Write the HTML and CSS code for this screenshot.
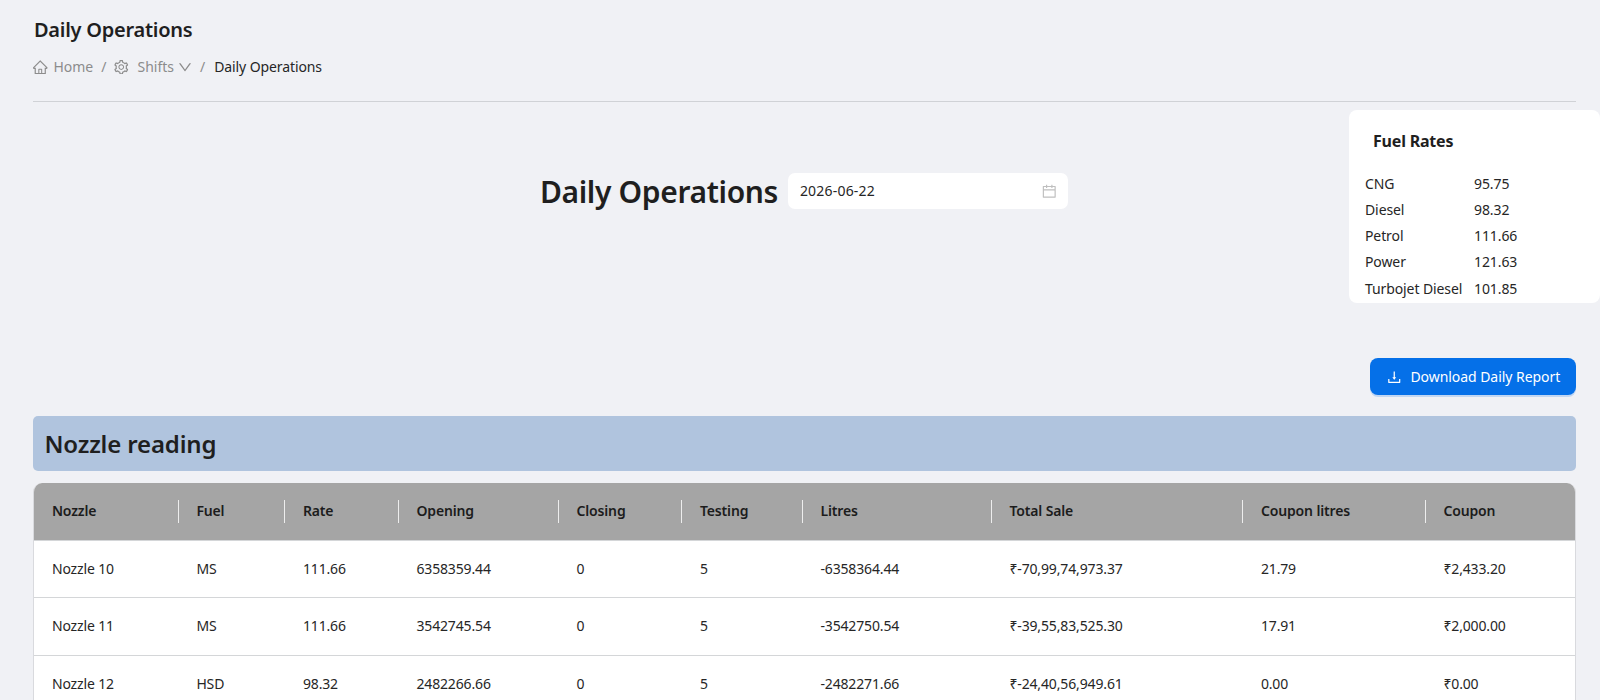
FILE: index.html
```
<!DOCTYPE html>
<html lang="en">
<head>
  <meta charset="UTF-8" />
  <meta name="viewport" content="width=device-width, initial-scale=1.0" />
  <title>Daily Operations</title>
  <link rel="stylesheet" href="styles.css">
</head>
<body>
  <header class="page-header">
    <h1>Daily Operations</h1>
    <nav class="breadcrumb">
      <a class="crumb-home"><svg class="icon" viewBox="64 64 896 896"><path d="M946.5 505L560.1 118.8l-25.9-25.9a31.5 31.5 0 00-44.4 0L77.5 505a63.9 63.9 0 00-18.8 46c.4 35.2 29.7 63.3 64.9 63.3h42.5V940h691.8V614.3h43.4c17.1 0 33.2-6.7 45.3-18.8a63.6 63.6 0 0018.7-45.3c0-17-6.7-33.1-18.8-45.2zM568 868H456V664h112v204zm217.9-325.7V868H632V640c0-22.1-17.9-40-40-40H432c-22.1 0-40 17.9-40 40v228H238.1V542.3h-96l370-369.7 23.1 23.1L882 542.3h-96.1z"/></svg><span>Home</span></a>
      <span class="slash">/</span>
      <a class="crumb-shifts"><svg class="icon" viewBox="64 64 896 896"><path d="M924.8 625.7l-65.5-56c3.1-19 4.7-38.4 4.7-57.8s-1.6-38.8-4.7-57.8l65.5-56a32.03 32.03 0 009.3-35.2l-.9-2.6a443.74 443.74 0 00-79.7-137.9l-1.8-2.1a32.12 32.12 0 00-35.1-9.5l-81.3 28.9c-30-24.6-63.5-44-99.7-57.6l-15.7-85a32.05 32.05 0 00-25.8-25.7l-2.7-.5c-52.1-9.4-106.9-9.4-159 0l-2.7.5a32.05 32.05 0 00-25.8 25.7l-15.8 85.4a351.86 351.86 0 00-99 57.4l-81.9-29.1a32 32 0 00-35.1 9.5l-1.8 2.1a446.02 446.02 0 00-79.7 137.9l-.9 2.6c-4.5 12.5-.8 26.5 9.3 35.2l66.3 56.6c-3.1 18.8-4.6 38-4.6 57.1 0 19.2 1.5 38.4 4.6 57.1L99 625.5a32.03 32.03 0 00-9.3 35.2l.9 2.6c18.1 50.4 44.9 96.9 79.7 137.9l1.8 2.1a32.12 32.12 0 0035.1 9.5l81.9-29.1c29.8 24.5 63.1 43.9 99 57.4l15.8 85.4a32.05 32.05 0 0025.8 25.7l2.7.5a449.4 449.4 0 00159 0l2.7-.5a32.05 32.05 0 0025.8-25.7l15.7-85a350 350 0 0099.7-57.6l81.3 28.9a32 32 0 0035.1-9.5l1.8-2.1c34.8-41.1 61.6-87.5 79.7-137.9l.9-2.6c4.5-12.3.8-26.3-9.3-35zM788.3 465.9c2.5 15.1 3.8 30.6 3.8 46.1s-1.3 31-3.8 46.1l-6.6 40.1 74.7 63.9a370.03 370.03 0 01-42.6 73.6L721 702.8l-31.4 25.8c-23.9 19.6-50.5 35-79.3 45.8l-38.1 14.3-17.9 97a377.5 377.5 0 01-85 0l-17.9-97.2-37.8-14.5c-28.5-10.8-55-26.2-78.7-45.7l-31.4-25.9-93.4 33.2c-17-22.9-31.2-47.6-42.6-73.6l75.5-64.5-6.5-40c-2.4-14.9-3.7-30.3-3.7-45.5 0-15.3 1.2-30.6 3.7-45.5l6.5-40-75.5-64.5c11.3-26.1 25.6-50.7 42.6-73.6l93.4 33.2 31.4-25.9c23.7-19.5 50.2-34.9 78.7-45.7l37.9-14.3 17.9-97.2c28.1-3.2 56.8-3.2 85 0l17.9 97 38.1 14.3c28.7 10.8 55.4 26.2 79.3 45.8l31.4 25.8 92.8-32.9c17 22.9 31.2 47.6 42.6 73.6L781.8 426l6.5 39.9zM512 326c-97.2 0-176 78.8-176 176s78.8 176 176 176 176-78.8 176-176-78.8-176-176-176zm79.2 255.2A111.6 111.6 0 01512 614c-29.9 0-58-11.7-79.2-32.8A111.6 111.6 0 01400 502c0-29.9 11.7-58 32.8-79.2C454 401.6 482.1 390 512 390c29.9 0 58 11.6 79.2 32.8A111.6 111.6 0 01624 502c0 29.9-11.7 58-32.8 79.2z"/></svg><span>Shifts</span><svg class="icon icon-down" viewBox="64 64 896 896"><path d="M884 256h-75c-5.1 0-9.9 2.5-12.9 6.6L512 654.2 227.9 262.6c-3-4.1-7.8-6.6-12.9-6.6h-75c-6.5 0-10.3 7.4-6.5 12.7l352.6 486.1c12.8 17.6 39 17.6 51.7 0l352.6-486.1c3.9-5.3.1-12.7-6.4-12.7z"/></svg></a>
      <span class="slash">/</span>
      <span class="current">Daily Operations</span>
    </nav>
  </header>

  <main>
    <section class="top">
      <div class="date-row">
        <h2>Daily Operations</h2>
        <div class="date-picker">
          <span>2026-06-22</span>
          <svg class="icon" viewBox="64 64 896 896"><path d="M880 184H712v-64c0-4.4-3.6-8-8-8h-56c-4.4 0-8 3.6-8 8v64H384v-64c0-4.4-3.6-8-8-8h-56c-4.4 0-8 3.6-8 8v64H144c-17.7 0-32 14.3-32 32v664c0 17.7 14.3 32 32 32h736c17.7 0 32-14.3 32-32V216c0-17.7-14.3-32-32-32zm-40 656H184V460h656v380zM184 392V256h128v48c0 4.4 3.6 8 8 8h56c4.4 0 8-3.6 8-8v-48h256v48c0 4.4 3.6 8 8 8h56c4.4 0 8-3.6 8-8v-48h128v136H184z"/></svg>
        </div>
      </div>
      <div class="rates">
        <h3>Fuel Rates</h3>
        <dl>
          <dt>CNG</dt><dd>95.75</dd>
          <dt>Diesel</dt><dd>98.32</dd>
          <dt>Petrol</dt><dd>111.66</dd>
          <dt>Power</dt><dd>121.63</dd>
          <dt>Turbojet Diesel</dt><dd>101.85</dd>
        </dl>
      </div>
    </section>

    <div class="actions">
      <button class="download-btn">
        <svg class="icon" viewBox="64 64 896 896"><path d="M505.7 661a8 8 0 0012.6 0l112-141.7c4.1-5.2.4-12.9-6.3-12.9h-74.1V168c0-4.4-3.6-8-8-8h-60c-4.4 0-8 3.6-8 8v338.3H400c-6.7 0-10.4 7.7-6.3 12.9l112 141.8zM878 626h-60c-4.4 0-8 3.6-8 8v154H214V634c0-4.4-3.6-8-8-8h-60c-4.4 0-8 3.6-8 8v198c0 17.7 14.3 32 32 32h684c17.7 0 32-14.3 32-32V634c0-4.4-3.6-8-8-8z"/></svg>
        <span>Download Daily Report</span>
      </button>
    </div>

    <h2 class="section-title"><span>Nozzle reading</span></h2>

    <div class="table-wrap">
      <table>
        <colgroup>
          <col class="c-nozzle"><col class="c-fuel"><col class="c-rate"><col class="c-opening"><col class="c-closing">
          <col class="c-testing"><col class="c-litres"><col class="c-sale"><col class="c-clitres"><col class="c-coupon">
        </colgroup>
        <thead>
          <tr>
            <th>Nozzle</th><th>Fuel</th><th>Rate</th><th>Opening</th><th>Closing</th>
            <th>Testing</th><th>Litres</th><th>Total Sale</th><th>Coupon litres</th><th>Coupon</th>
          </tr>
        </thead>
        <tbody>
          <tr>
            <td>Nozzle 10</td><td>MS</td><td>111.66</td><td>6358359.44</td><td>0</td>
            <td>5</td><td>-6358364.44</td><td>₹-70,99,74,973.37</td><td>21.79</td><td>₹2,433.20</td>
          </tr>
          <tr>
            <td>Nozzle 11</td><td>MS</td><td>111.66</td><td>3542745.54</td><td>0</td>
            <td>5</td><td>-3542750.54</td><td>₹-39,55,83,525.30</td><td>17.91</td><td>₹2,000.00</td>
          </tr>
          <tr>
            <td>Nozzle 12</td><td>HSD</td><td>98.32</td><td>2482266.66</td><td>0</td>
            <td>5</td><td>-2482271.66</td><td>₹-24,40,56,949.61</td><td>0.00</td><td>₹0.00</td>
          </tr>
        </tbody>
      </table>
    </div>
  </main>
</body>
</html>
```
FILE: styles.css
```
*, *::before, *::after {
  box-sizing: border-box;
  margin: 0;
  padding: 0;
}
body {
  height: 100vh;
  overflow: hidden;
  background: #f0f1f5;
  color: #262626;
  font-family: "Segoe UI", "Noto Sans", sans-serif;
  font-size: 14px;
  line-height: 22px;
  padding-left: 33.4px;
}
h1, h2, h3, th {
  color: #1f1f1f;
  font-weight: 600;
}
.icon {
  width: 14.5px;
  height: 14.5px;
  fill: currentColor;
  flex: none;
}
.page-header {
  width: 1543px;
  height: 102px;
  padding-top: 15px;
  border-bottom: 1px solid #d0d2d6;
}
h1 {
  padding-left: 0.5px;
  font-size: 20px;
  line-height: 30px;
  letter-spacing: -0.25px;
}
.breadcrumb {
  display: flex;
  align-items: center;
  margin-top: 11px;
  color: #8c8c8c;
}
.breadcrumb a {
  display: flex;
  align-items: center;
}
.crumb-home .icon {
  margin-right: 5.5px;
}
.crumb-shifts .icon {
  margin-right: 8.5px;
}
.crumb-shifts .icon-down {
  width: 14px;
  margin: 0 0 0 4px;
}
.slash {
  margin: 0 8px;
}
.current {
  margin-left: 1px;
  color: #262626;
  letter-spacing: -0.1px;
}

.top {
  display: flex;
  height: 256px;
  padding-top: 8px;
}
.date-row {
  display: flex;
  flex: 1;
  height: 36px;
  margin-top: 63px;
  padding-left: 506.5px;
  align-items: center;
}
.date-row h2 {
  width: 248.5px;
  padding-top: 1px;
  font-size: 30px;
  line-height: 40px;
  letter-spacing: -0.35px;
  white-space: nowrap;
}
.date-picker {
  display: flex;
  width: 280px;
  height: 36px;
  padding: 0 11.5px;
  align-items: center;
  justify-content: space-between;
  background: #fff;
  border-radius: 7px;
}
.date-picker span {
  letter-spacing: 0.2px;
}
.date-picker .icon {
  color: #bfbfbf;
}
.rates {
  width: 251px;
  height: 193px;
  padding: 18px 16px 0;
  background: #fff;
  border-radius: 8px;
}
.rates h3 {
  margin-left: 8px;
  font-size: 16px;
  line-height: 26px;
  font-weight: 700;
  letter-spacing: -0.2px;
}
.rates dl {
  display: grid;
  grid-template-columns: 109px 1fr;
  grid-auto-rows: 26.13px;
  margin-top: 17px;
  line-height: 26px;
  letter-spacing: -0.1px;
}

.actions {
  display: flex;
  width: 1543px;
  justify-content: flex-end;
}
.download-btn {
  display: flex;
  width: 206px;
  height: 37px;
  align-items: center;
  gap: 9px;
  padding: 0 16.5px;
  border: none;
  border-radius: 8px;
  background: #0570e8;
  box-shadow: 0 2px 0 rgba(5, 112, 232, 0.2);
  color: #fff;
  font: inherit;
  letter-spacing: -0.05px;
  white-space: nowrap;
}
.download-btn .icon {
  margin-top: 1px;
}
.section-title {
  width: 1543px;
  height: 55px;
  margin-top: 21px;
  padding-left: 11px;
  background: #b0c4de;
  border-radius: 5px;
  font-size: 24px;
  line-height: 56px;
  letter-spacing: -0.15px;
}
.table-wrap {
  width: 1543px;
  margin-top: 12px;
  border: solid #d9dade;
  border-width: 0 1px;
  border-radius: 9px 9px 0 0;
  overflow: hidden;
}
table {
  width: 1541px;
  table-layout: fixed;
  border-collapse: separate;
  border-spacing: 0;
  background: #fff;
}
.c-nozzle { width: 144.5px; }
.c-fuel { width: 106.5px; }
.c-rate { width: 113.5px; }
.c-opening { width: 160px; }
.c-closing { width: 123.5px; }
.c-testing { width: 120.5px; }
.c-litres { width: 189px; }
.c-sale { width: 251.5px; }
.c-clitres { width: 182.5px; }
th, td {
  height: 57.5px;
  padding: 0 17.5px;
  border-bottom: 1px solid #d4d6d8;
  text-align: left;
  white-space: nowrap;
  letter-spacing: -0.14px;
}
th {
  position: relative;
  background: #a5a5a5;
  color: #1c1c1c;
}
/* column divider */
th:not(:last-child)::after {
  content: "";
  position: absolute;
  top: 17px;
  right: 0;
  width: 1px;
  height: 23px;
  background: #ededed;
}
```
